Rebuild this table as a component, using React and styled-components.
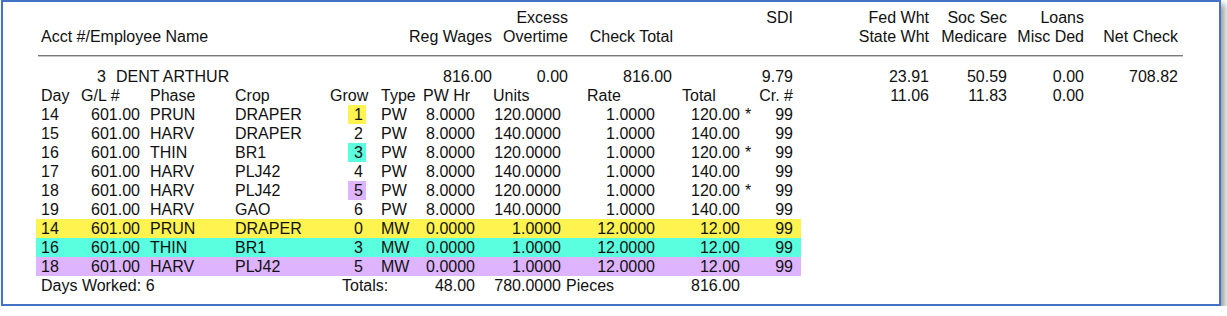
import React from 'react';
import styled, { createGlobalStyle } from 'styled-components';

const GlobalStyle = createGlobalStyle`
  body {
    margin: 0;
    background: #fff;
    font-family: "Liberation Sans", Arial, sans-serif;
  }
`;

const YELLOW = '#fff350';
const CYAN = '#5affdf';
const LAVENDER = '#dfb4ff';

const Frame = styled.div`
  box-sizing: border-box;
  width: 1220px;
  height: 306px;
  margin-left: 1px;
  border: 2px solid #4472c4;
  box-shadow: 4px 4px 6px rgba(0, 0, 0, 0.38);
  padding: 6px 35px 0 33px;
  font-size: 16px;
  line-height: 19px;
  color: #111;
`;

const Band = styled.div`
  display: flex;
`;

const LeftPart = styled.div`
  width: 765px;
  flex: none;
`;

const RightPart = styled.div`
  flex: 1;
`;

const SummaryRow = styled.div`
  display: grid;
  grid-template-columns: ${(p) => p.$cols};
  height: 19px;
`;

const Rule = styled.div`
  margin: 9px 0 10px 2px;
  height: 2px;
  width: 1145px;
  background: linear-gradient(#7a7a7a 50%, #c8c8c8 50%);
`;

const Cell = styled.div`
  white-space: nowrap;
  text-align: ${(p) => p.$align || 'left'};
  padding-left: ${(p) => p.$pl || 0}px;
  padding-right: ${(p) => p.$pr || 0}px;
`;

const Acct = styled.span`
  display: inline-block;
  width: 65px;
  text-align: right;
  margin-right: 10px;
`;

const DetailRow = styled.div`
  display: grid;
  grid-template-columns: 40px 59px 95px 95px 37px 56px 52px 86px 94px 100px 38px;
  padding: 0 8px 0 5px;
  height: 19px;
  background: ${(p) => p.$bg || 'transparent'};
`;

const GrowTag = styled.span`
  display: inline-block;
  box-sizing: border-box;
  width: 18px;
  padding-right: 3px;
  text-align: right;
  background: ${(p) => p.$bg || 'transparent'};
`;

const Mark = styled.span`
  display: inline-block;
  width: 15px;
  padding-left: 5px;
  box-sizing: border-box;
  text-align: left;
`;

const LEFT_COLS = '364px 92px 76px 105px 120px';
const RIGHT_COLS = '128px 78px 77px 94px';

const details = [
  { day: 14, phase: 'PRUN', crop: 'DRAPER', grow: 1, growBg: YELLOW, type: 'PW', hr: '8.0000', units: '120.0000', rate: '1.0000', total: '120.00', mark: true },
  { day: 15, phase: 'HARV', crop: 'DRAPER', grow: 2, type: 'PW', hr: '8.0000', units: '140.0000', rate: '1.0000', total: '140.00' },
  { day: 16, phase: 'THIN', crop: 'BR1', grow: 3, growBg: CYAN, type: 'PW', hr: '8.0000', units: '120.0000', rate: '1.0000', total: '120.00', mark: true },
  { day: 17, phase: 'HARV', crop: 'PLJ42', grow: 4, type: 'PW', hr: '8.0000', units: '140.0000', rate: '1.0000', total: '140.00' },
  { day: 18, phase: 'HARV', crop: 'PLJ42', grow: 5, growBg: LAVENDER, type: 'PW', hr: '8.0000', units: '120.0000', rate: '1.0000', total: '120.00', mark: true },
  { day: 19, phase: 'HARV', crop: 'GAO', grow: 6, type: 'PW', hr: '8.0000', units: '140.0000', rate: '1.0000', total: '140.00' },
  { day: 14, phase: 'PRUN', crop: 'DRAPER', grow: 0, rowBg: YELLOW, type: 'MW', hr: '0.0000', units: '1.0000', rate: '12.0000', total: '12.00' },
  { day: 16, phase: 'THIN', crop: 'BR1', grow: 3, rowBg: CYAN, type: 'MW', hr: '0.0000', units: '1.0000', rate: '12.0000', total: '12.00' },
  { day: 18, phase: 'HARV', crop: 'PLJ42', grow: 5, rowBg: LAVENDER, type: 'MW', hr: '0.0000', units: '1.0000', rate: '12.0000', total: '12.00' },
];

function App() {
  return (
    <>
      <GlobalStyle />
      <Frame>
        <Band>
          <LeftPart>
            <SummaryRow $cols={LEFT_COLS}>
              <Cell />
              <Cell />
              <Cell $align="right">Excess</Cell>
              <Cell />
              <Cell $align="right">SDI</Cell>
            </SummaryRow>
            <SummaryRow $cols={LEFT_COLS}>
              <Cell $pl={5}>Acct #/Employee Name</Cell>
              <Cell $align="right">Reg Wages</Cell>
              <Cell $align="right">Overtime</Cell>
              <Cell $align="right">Check Total</Cell>
              <Cell />
            </SummaryRow>
          </LeftPart>
          <RightPart>
            <SummaryRow $cols={RIGHT_COLS}>
              <Cell $align="right">Fed Wht</Cell>
              <Cell $align="right">Soc Sec</Cell>
              <Cell $align="right">Loans</Cell>
              <Cell />
            </SummaryRow>
            <SummaryRow $cols={RIGHT_COLS}>
              <Cell $align="right">State Wht</Cell>
              <Cell $align="right">Medicare</Cell>
              <Cell $align="right">Misc Ded</Cell>
              <Cell $align="right">Net Check</Cell>
            </SummaryRow>
          </RightPart>
        </Band>

        <Rule />

        <Band>
          <LeftPart>
            <SummaryRow $cols={LEFT_COLS}>
              <Cell $pl={5}>
                <Acct>3</Acct>DENT ARTHUR
              </Cell>
              <Cell $align="right">816.00</Cell>
              <Cell $align="right">0.00</Cell>
              <Cell $align="right" $pr={1}>816.00</Cell>
              <Cell $align="right">9.79</Cell>
            </SummaryRow>

            <DetailRow>
              <Cell>Day</Cell>
              <Cell>G/L #</Cell>
              <Cell $pl={10}>Phase</Cell>
              <Cell>Crop</Cell>
              <Cell>Grow</Cell>
              <Cell $pl={14}>Type</Cell>
              <Cell>PW Hr</Cell>
              <Cell $pl={18}>Units</Cell>
              <Cell $pl={26}>Rate</Cell>
              <Cell $pl={27}>Total</Cell>
              <Cell $align="right">Cr. #</Cell>
            </DetailRow>

            {details.map((d, i) => (
              <DetailRow key={i} $bg={d.rowBg}>
                <Cell>{d.day}</Cell>
                <Cell $align="right">601.00</Cell>
                <Cell $pl={10}>{d.phase}</Cell>
                <Cell>{d.crop}</Cell>
                <Cell $align="right" $pr={1}>
                  <GrowTag $bg={d.growBg}>{d.grow}</GrowTag>
                </Cell>
                <Cell $pl={14}>{d.type}</Cell>
                <Cell $align="right">{d.hr}</Cell>
                <Cell $align="right">{d.units}</Cell>
                <Cell $align="right">{d.rate}</Cell>
                <Cell $align="right">
                  {d.total}
                  <Mark>{d.mark ? '*' : ''}</Mark>
                </Cell>
                <Cell $align="right">99</Cell>
              </DetailRow>
            ))}

            <DetailRow>
              <Cell style={{ gridColumn: 'span 4' }}>Days Worked: 6</Cell>
              <Cell $pl={12}>Totals:</Cell>
              <Cell />
              <Cell $align="right">48.00</Cell>
              <Cell $align="right">780.0000</Cell>
              <Cell $pl={5}>Pieces</Cell>
              <Cell $align="right">
                816.00
                <Mark />
              </Cell>
              <Cell />
            </DetailRow>
          </LeftPart>
          <RightPart>
            <SummaryRow $cols={RIGHT_COLS}>
              <Cell $align="right">23.91</Cell>
              <Cell $align="right">50.59</Cell>
              <Cell $align="right">0.00</Cell>
              <Cell $align="right">708.82</Cell>
            </SummaryRow>
            <SummaryRow $cols={RIGHT_COLS}>
              <Cell $align="right">11.06</Cell>
              <Cell $align="right">11.83</Cell>
              <Cell $align="right">0.00</Cell>
              <Cell />
            </SummaryRow>
          </RightPart>
        </Band>
      </Frame>
    </>
  );
}

export default App;
